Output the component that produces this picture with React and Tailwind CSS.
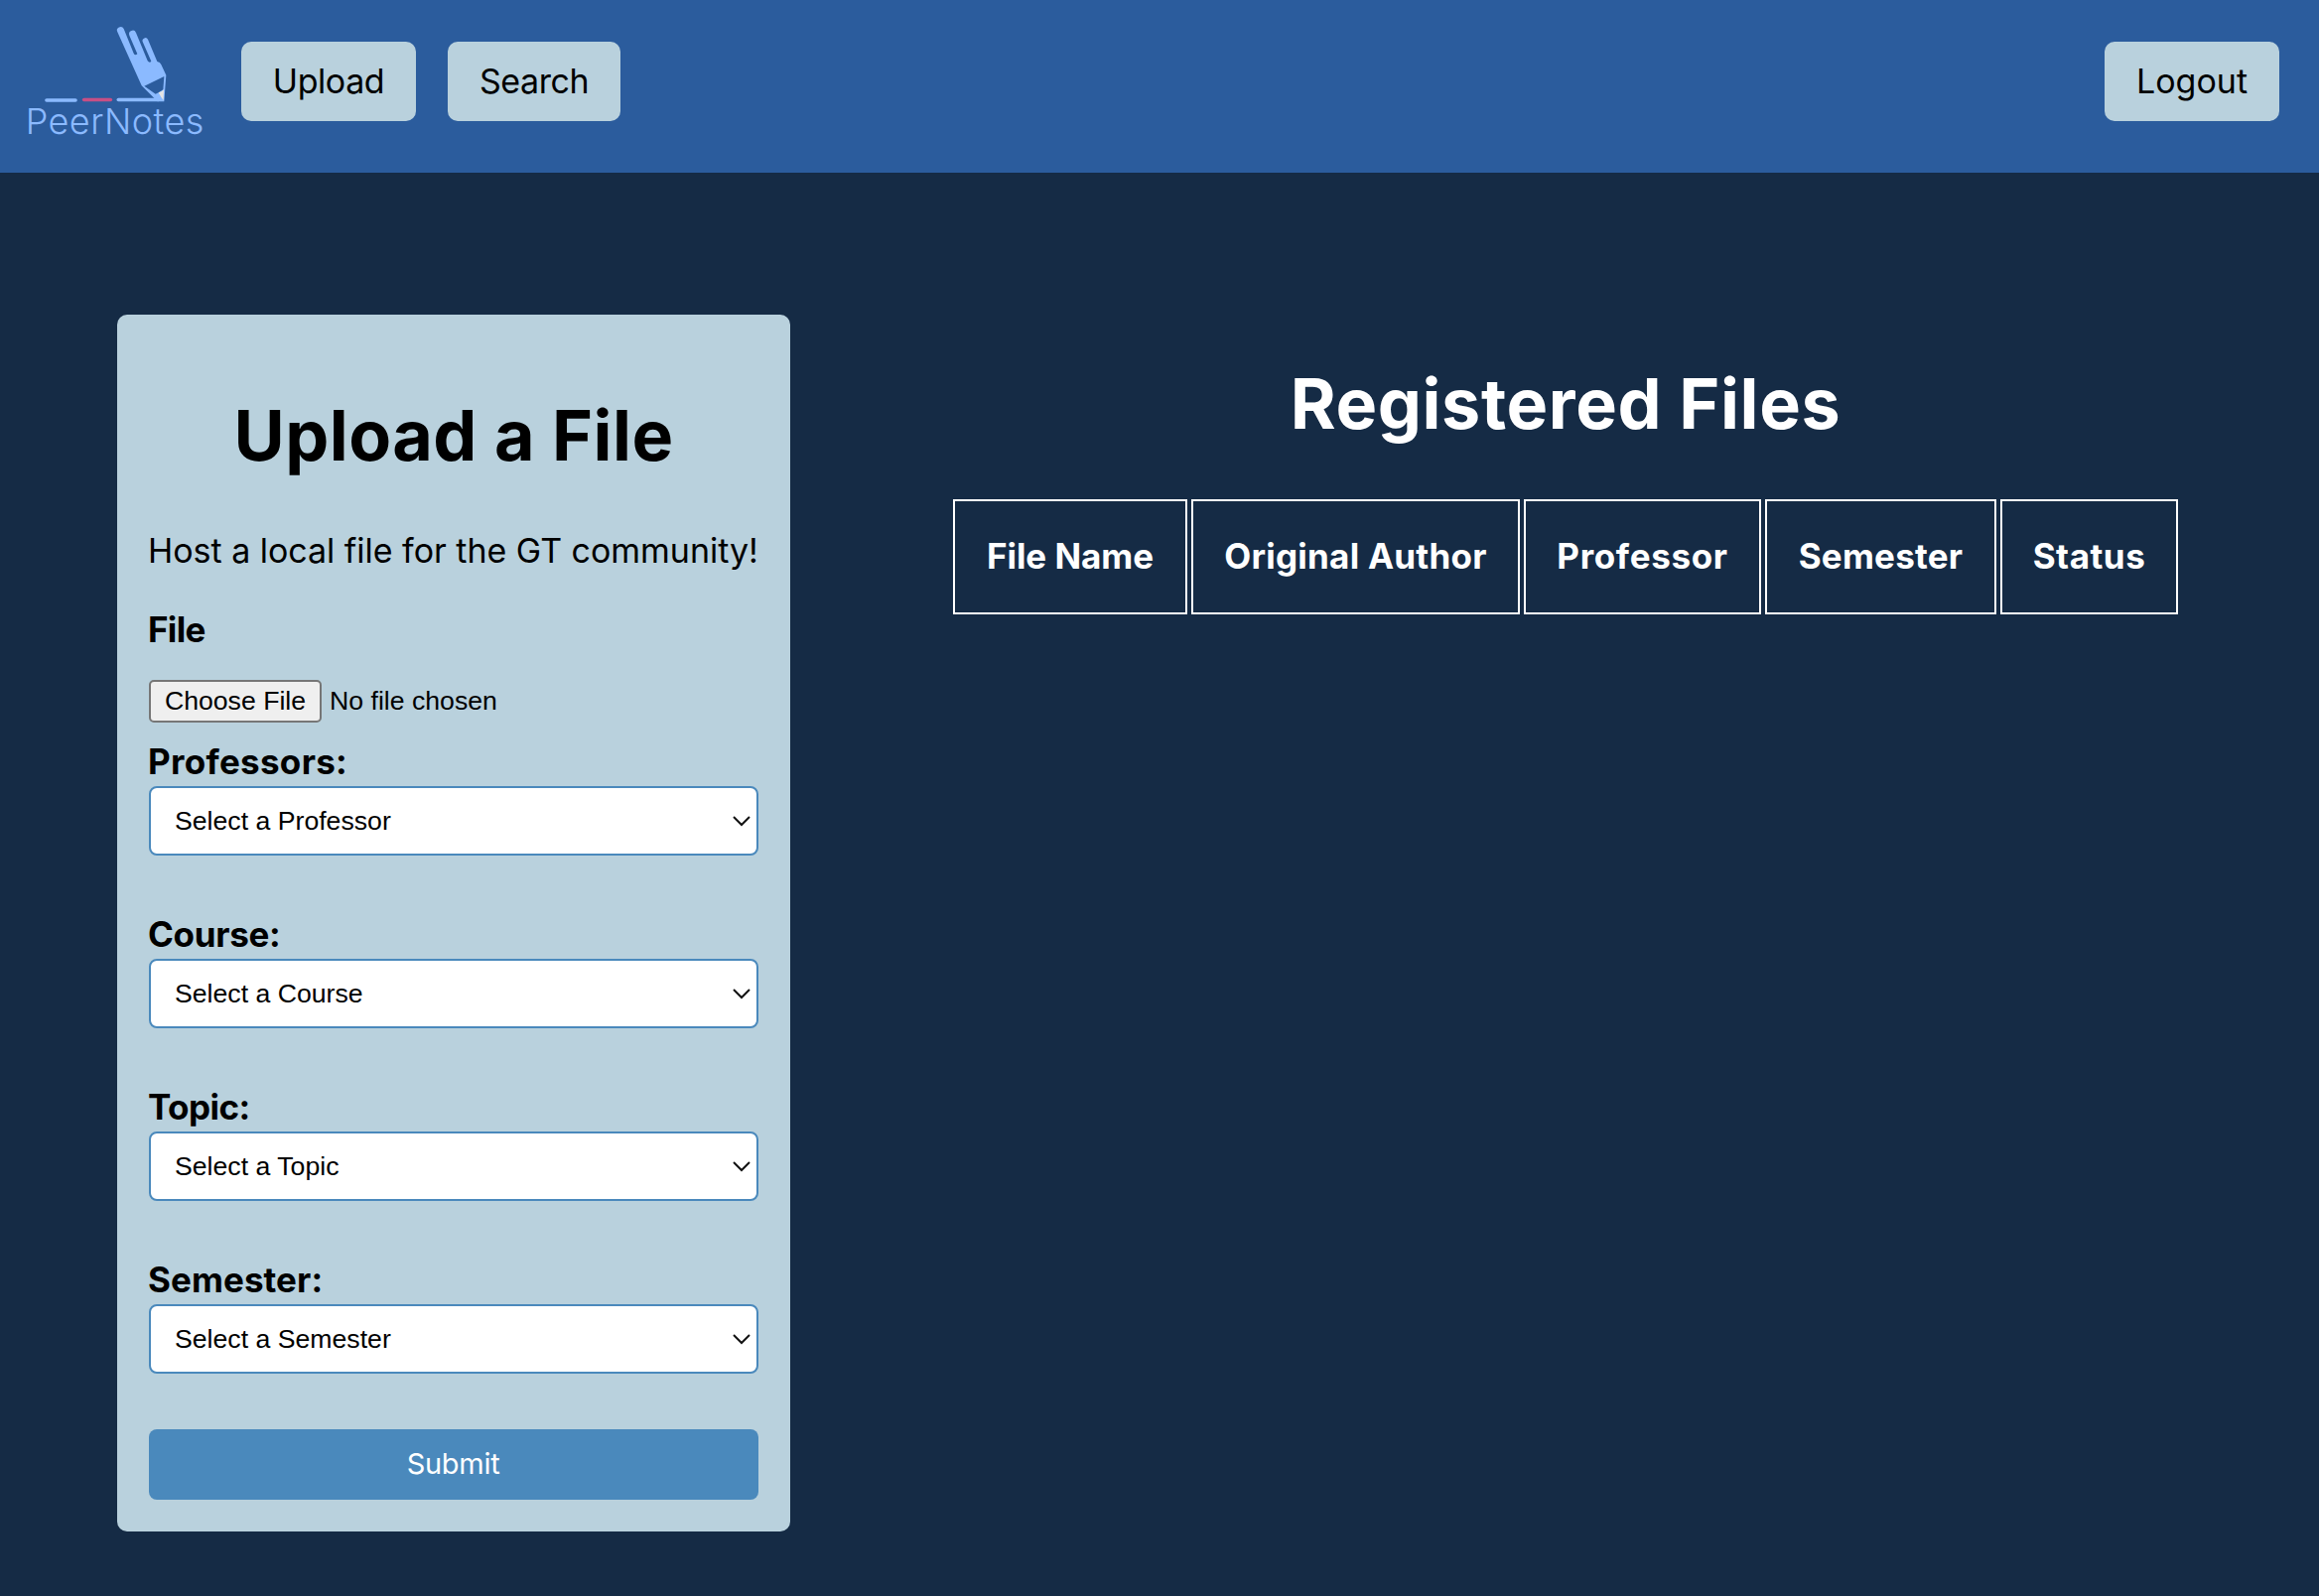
import React from "react";

const columns = [
  { label: "File Name", cell: "w-[236px]", text: "tracking-[-0.05px]" },
  { label: "Original Author", cell: "w-[331px]", text: "tracking-[0.24px]" },
  { label: "Professor", cell: "w-[239px]", text: "tracking-[0.65px]" },
  { label: "Semester", cell: "w-[233px]", text: "tracking-[0.25px]" },
  { label: "Status", cell: "w-[179px]", text: "tracking-[0.55px]" },
];

const fields = [
  { label: "Professors:", option: "Select a Professor", text: "tracking-[0.3px]" },
  { label: "Course:", option: "Select a Course", text: "tracking-[-0.3px]" },
  { label: "Topic:", option: "Select a Topic", text: "tracking-[-0.55px]" },
  { label: "Semester:", option: "Select a Semester", text: "tracking-[0.08px]" },
];

function Logo() {
  return (
    <svg className="h-[174px] w-[243px] shrink-0" viewBox="0 0 729 522">
      <g strokeLinecap="round" strokeWidth="11">
        <path d="M141 303H228" stroke="#8bbaff" />
        <path d="M254 301.500H334" stroke="#c74f85" />
        <path d="M358 301.500H478" stroke="#8bbaff" />
      </g>
      <path
        fill="#8bbaff"
        d="M355 97A10 10 0 0 1 374 87L404 161Q408 170 415 163L391 107A10 10 0 0 1 411 99L446 184Q452 192 457 185L432 128A8 8 0 0 1 447 119L475 186Q484 187 487 195L502 227L496 307H476L428 259Z"
      />
      <path fill="#2b5c9d" d="M436 260L496 231L493 271Q481 280 470 284Z" />
      <path fill="#e4e4e4" d="M479 280Q488 279 495 271L494 303Q486 294 479 280Z" />
      <text x="77" y="404" fill="#8bbaff" fontFamily="Inter, sans-serif" fontSize="108" fontWeight="300" letterSpacing="1.4">
        PeerNotes
      </text>
    </svg>
  );
}

function NavButton({ children, className }) {
  return (
    <button className={`h-20 rounded-[10px] bg-[#b9d1dd] pb-px text-center text-[34px] leading-[48px] ${className}`}>
      {children}
    </button>
  );
}

function SelectField({ label, option, text }) {
  return (
    <div>
      <label className={`-ml-px block pb-[2px] text-[35px] leading-[46px] font-[650] ${text}`}>{label}</label>
      <div className="relative">
        <select className="block h-[70px] w-full appearance-none rounded-lg border-2 border-[#4a89bc] bg-white pl-6 font-['Liberation_Sans',sans-serif] text-[26.67px] text-black">
          <option>{option}</option>
        </select>
        <svg
          className="pointer-events-none absolute top-[30px] right-[8px] h-[12px] w-[18px]"
          viewBox="0 0 18 12"
          fill="none"
          stroke="#111"
          strokeWidth="2"
        >
          <path d="M1 1L9 9L17 1" />
        </svg>
      </div>
    </div>
  );
}

export default function App() {
  return (
    <div className="min-h-[1608px] w-full bg-[#152b45] font-['Inter',sans-serif] text-black">
      <header className="flex h-[174px] bg-[#2b5c9d]">
        <Logo />
        <nav className="flex flex-1 gap-8 pt-[42px] pr-10">
          <NavButton className="w-44 tracking-[-0.43px]">Upload</NavButton>
          <NavButton className="w-[174px] tracking-[-0.44px]">Search</NavButton>
          <NavButton className="ml-auto w-44">Logout</NavButton>
        </nav>
      </header>

      <main className="flex items-start pt-[143px] pl-[118px]">
        <section className="w-[678px] rounded-[10px] bg-[#b9d1dd] p-8">
          <h1 className="mt-[42px] text-center text-[70px] leading-[96px] font-[650] tracking-[0.45px]">
            Upload a File
          </h1>
          <p className="mt-[44px] -ml-px text-[34px] leading-[48px] tracking-[-0.03px] whitespace-nowrap">
            Host a local file for the GT community!
          </p>
          <h3 className="mt-[31px] -ml-px text-[35px] leading-[48px] font-[650] tracking-[-0.7px]">File</h3>
          <div className="mt-[27px] mb-4 flex h-[43px] items-center font-['Liberation_Sans',sans-serif] text-[26.67px]">
            <button className="h-[43px] w-[174px] rounded-[5px] border-2 border-[#767676] bg-[#efefef] pb-px leading-[36px]">
              Choose File
            </button>
            <span className="ml-2 leading-[43px]">No file chosen</span>
          </div>
          <div className="flex flex-col gap-14">
            {fields.map((f) => (
              <SelectField key={f.label} {...f} />
            ))}
            <button className="h-[71px] rounded-lg bg-[#4a89bc] pr-px pb-px text-[29px] tracking-[-0.29px] text-white">
              Submit
            </button>
          </div>
        </section>

        <section className="flex flex-1 flex-col items-center pt-[42px] pl-[22px] text-white">
          <h1 className="text-[70px] leading-[96px] font-[650] tracking-[0.6px]">Registered Files</h1>
          <div className="mt-[48px] flex gap-1">
            {columns.map((c) => (
              <div
                key={c.label}
                className={`flex h-[116px] items-center justify-center border-2 border-white pb-px text-[35px] font-[650] whitespace-nowrap ${c.cell} ${c.text}`}
              >
                {c.label}
              </div>
            ))}
          </div>
        </section>
      </main>
    </div>
  );
}
